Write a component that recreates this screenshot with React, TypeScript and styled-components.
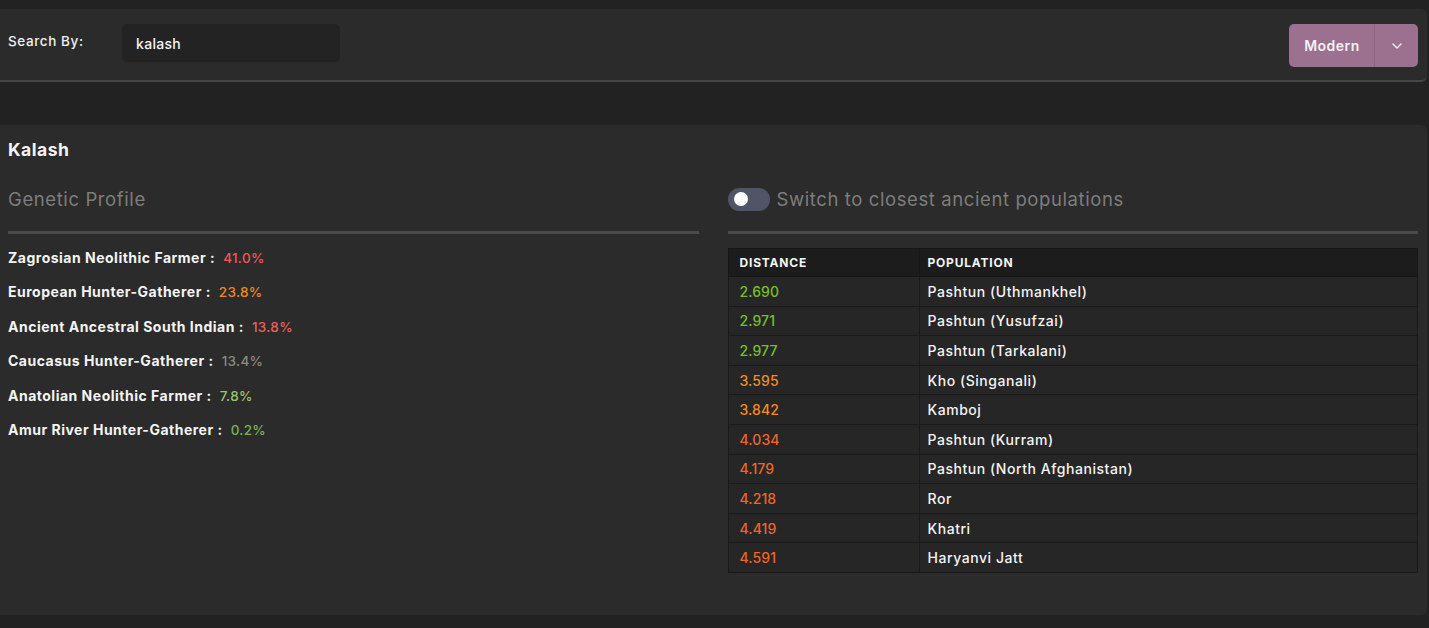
import React, { useState } from "react";
import styled, { createGlobalStyle } from "styled-components";

const GlobalStyle = createGlobalStyle`
  body {
    margin: 0;
    background: #222222;
    font-family: "Inter", "Noto Sans", sans-serif;
    color: #f2f2f2;
  }
`;

const Page = styled.div`
  padding: 9px 2px 0 0;
  min-height: 628px;
  box-sizing: border-box;
`;

const SearchBar = styled.div`
  display: flex;
  align-items: flex-start;
  height: 73px;
  box-sizing: border-box;
  padding: 15px 9px 0 8px;
  background: #2b2b2b;
  border-bottom: 2px solid #464646;
  border-radius: 0 6px 6px 0;
`;

const SearchLabel = styled.label`
  font-size: 13.5px;
  font-weight: 500;
  letter-spacing: 0.6px;
  line-height: 18px;
  margin-top: 8px;
  width: 114px;
  flex-shrink: 0;
  color: #f0f0f0;
`;

const SearchInput = styled.input`
  width: 218px;
  height: 38px;
  box-sizing: border-box;
  padding: 0 14px;
  border: none;
  outline: none;
  border-radius: 5px;
  background: #232323;
  color: #f4f4f4;
  font-family: inherit;
  font-size: 14px;
  font-weight: 500;
  letter-spacing: 0.3px;
`;

const Spacer = styled.div`
  flex: 1;
`;

const SplitButton = styled.div`
  display: flex;
  height: 43px;
  border-radius: 5px;
  overflow: hidden;
  background: #9c708f;
`;

const ButtonMain = styled.button`
  border: none;
  background: transparent;
  color: #f6f0f4;
  font-family: inherit;
  font-size: 14px;
  font-weight: 600;
  letter-spacing: 0.5px;
  padding: 0 0 0 1px;
  width: 85px;
  cursor: pointer;
`;

const ButtonCaret = styled.button`
  border: none;
  border-left: 1px solid #8e6482;
  background: transparent;
  width: 44px;
  display: flex;
  align-items: center;
  justify-content: center;
  cursor: pointer;
`;

const Card = styled.section`
  margin-top: 43px;
  background: #2b2b2b;
  border-radius: 0 6px 6px 0;
  padding: 14px 9px 42px 8px;
`;

const Title = styled.h2`
  margin: 0;
  font-size: 17.5px;
  font-weight: 700;
  letter-spacing: 0.5px;
  line-height: 22px;
  color: #f4f4f4;
`;

const Columns = styled.div`
  display: grid;
  grid-template-columns: 1fr 1fr;
  column-gap: 29px;
  margin-top: 15px;
`;

const Column = styled.div`
  display: flex;
  flex-direction: column;
`;

const ColumnHead = styled.div`
  height: 46px;
  display: flex;
  align-items: center;
  gap: 7px;
  font-size: 18.5px;
  letter-spacing: 0.6px;
  color: #7d7d7d;
  white-space: nowrap;
`;

const Divider = styled.hr`
  margin: 9px 0 0;
  border: none;
  height: 3px;
  background: #4b4b4b;
`;

const Toggle = styled.button<{ $on: boolean }>`
  position: relative;
  width: 42px;
  height: 23px;
  border: none;
  border-radius: 12px;
  background: ${(p) => (p.$on ? "#9c708f" : "#505466")};
  padding: 0;
  cursor: pointer;
  flex-shrink: 0;
`;

const Knob = styled.span<{ $on: boolean }>`
  position: absolute;
  top: 4.5px;
  left: ${(p) => (p.$on ? "22px" : "6px")};
  width: 14px;
  height: 14px;
  border-radius: 50%;
  background: #ffffff;
`;

const ProfileList = styled.ul`
  list-style: none;
  margin: 7px 0 0;
  padding: 0;
`;

const ProfileItem = styled.li`
  font-size: 14px;
  letter-spacing: 0.5px;
  line-height: 20.4px;
  padding: 7px 0;
  font-weight: 700;
  color: #f4f4f4;
`;

const Percent = styled.span<{ $color: string }>`
  margin-left: 8px;
  font-weight: 500;
  font-size: 13.5px;
  letter-spacing: 0.3px;
  color: ${(p) => p.$color};
`;

const Table = styled.table`
  margin-top: 14px;
  width: 100%;
  border-collapse: collapse;
`;

const HeadCell = styled.th`
  text-align: left;
  background: #1c1c1c;
  color: #f4f4f4;
  font-size: 12px;
  font-weight: 700;
  letter-spacing: 0.8px;
  height: 27px;
  padding: 0 8px;
  border: 1px solid #181818;
  &:first-child {
    width: 171px;
    padding-left: 11px;
  }
`;

const Cell = styled.td`
  height: 28.6px;
  padding: 0 8px;
  background: #262626;
  border: 1px solid #1a1a1a;
  font-size: 14px;
  font-weight: 500;
`;

const DistanceCell = styled(Cell)<{ $color: string }>`
  padding-left: 11px;
  color: ${(p) => p.$color};
  letter-spacing: 0.1px;
`;

const NameCell = styled(Cell)`
  color: #f4f4f4;
  letter-spacing: 0.55px;
`;

const profile = [
  { name: "Zagrosian Neolithic Farmer", value: "41.0%", color: "#ef5756" },
  { name: "European Hunter-Gatherer", value: "23.8%", color: "#f2861b" },
  { name: "Ancient Ancestral South Indian", value: "13.8%", color: "#e9605e" },
  { name: "Caucasus Hunter-Gatherer", value: "13.4%", color: "#8c8a7e" },
  { name: "Anatolian Neolithic Farmer", value: "7.8%", color: "#9dc46a" },
  { name: "Amur River Hunter-Gatherer", value: "0.2%", color: "#7fae58" },
];

const distanceColor = (d: number) => {
  if (d < 3) return "#74c126";
  if (d < 4) return "#f78c1c";
  return "#f0652b";
};

const populations = [
  { distance: 2.69, name: "Pashtun (Uthmankhel)" },
  { distance: 2.971, name: "Pashtun (Yusufzai)" },
  { distance: 2.977, name: "Pashtun (Tarkalani)" },
  { distance: 3.595, name: "Kho (Singanali)" },
  { distance: 3.842, name: "Kamboj" },
  { distance: 4.034, name: "Pashtun (Kurram)" },
  { distance: 4.179, name: "Pashtun (North Afghanistan)" },
  { distance: 4.218, name: "Ror" },
  { distance: 4.419, name: "Khatri" },
  { distance: 4.591, name: "Haryanvi Jatt" },
];

const App = () => {
  const [query, setQuery] = useState("kalash");
  const [ancient, setAncient] = useState(false);

  return (
    <Page>
      <GlobalStyle />
      <SearchBar>
        <SearchLabel>Search By:</SearchLabel>
        <SearchInput value={query} onChange={(e) => setQuery(e.target.value)} />
        <Spacer />
        <SplitButton>
          <ButtonMain>Modern</ButtonMain>
          <ButtonCaret>
            <svg width="10" height="6" viewBox="0 0 10 6" fill="none">
              <path d="M1 1l4 4 4-4" stroke="#f6f0f4" strokeWidth="1.4" strokeLinecap="round" strokeLinejoin="round" />
            </svg>
          </ButtonCaret>
        </SplitButton>
      </SearchBar>

      <Card>
        <Title>Kalash</Title>
        <Columns>
          <Column>
            <ColumnHead>Genetic Profile</ColumnHead>
            <Divider />
            <ProfileList>
              {profile.map((p) => (
                <ProfileItem key={p.name}>
                  {p.name} :<Percent $color={p.color}>{p.value}</Percent>
                </ProfileItem>
              ))}
            </ProfileList>
          </Column>
          <Column>
            <ColumnHead>
              <Toggle $on={ancient} onClick={() => setAncient(!ancient)}>
                <Knob $on={ancient} />
              </Toggle>
              Switch to closest ancient populations
            </ColumnHead>
            <Divider />
            <Table>
              <thead>
                <tr>
                  <HeadCell>DISTANCE</HeadCell>
                  <HeadCell>POPULATION</HeadCell>
                </tr>
              </thead>
              <tbody>
                {populations.map((r) => (
                  <tr key={r.name}>
                    <DistanceCell $color={distanceColor(r.distance)}>{r.distance.toFixed(3)}</DistanceCell>
                    <NameCell>{r.name}</NameCell>
                  </tr>
                ))}
              </tbody>
            </Table>
          </Column>
        </Columns>
      </Card>
    </Page>
  );
};

export default App;
